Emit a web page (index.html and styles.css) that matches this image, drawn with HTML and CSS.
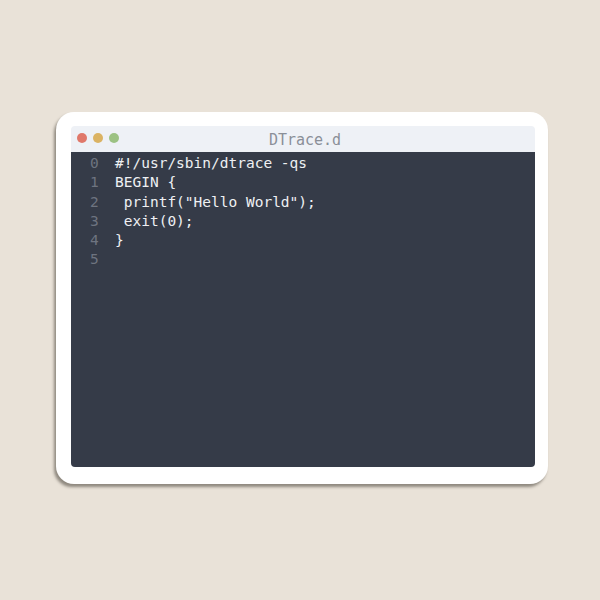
FILE: index.html
```html
<!DOCTYPE html>
<html>
<head>
<meta charset="utf-8">
<link rel="stylesheet" href="styles.css">
</head>
<body>
<div class="card">
  <div class="window">
    <div class="titlebar">
      <div class="dots">
        <span class="dot red"></span>
        <span class="dot yellow"></span>
        <span class="dot green"></span>
      </div>
      <div class="title">DTrace.d</div>
    </div>
    <div class="editor">
      <div class="line"><span class="num">0</span><span class="code">#!/usr/sbin/dtrace -qs</span></div>
      <div class="line"><span class="num">1</span><span class="code">BEGIN {</span></div>
      <div class="line"><span class="num">2</span><span class="code"> printf("Hello World");</span></div>
      <div class="line"><span class="num">3</span><span class="code"> exit(0);</span></div>
      <div class="line"><span class="num">4</span><span class="code">}</span></div>
      <div class="line"><span class="num">5</span><span class="code"></span></div>
    </div>
  </div>
</div>
</body>
</html>
```
FILE: styles.css
```css
html, body {
  margin: 0;
  padding: 0;
}
body {
  width: 600px;
  height: 600px;
  background: #e9e2d8;
  overflow: hidden;
}
.card {
  margin: 112px 0 0 56px;
  width: 492px;
  height: 372px;
  box-sizing: border-box;
  padding: 14px 13px 17px 15px;
  background: #ffffff;
  border-radius: 18px;
  box-shadow: -2px 3px 3px rgba(70, 64, 55, 0.55);
  display: flex;
}
.window {
  flex: 1;
  display: flex;
  flex-direction: column;
  border-radius: 4px;
  overflow: hidden;
}
.titlebar {
  height: 26px;
  background: #eef1f6;
  display: flex;
  align-items: center;
  position: relative;
}
.dots {
  display: flex;
  gap: 6px;
  padding-left: 6px;
  padding-bottom: 2px;
}
.dot {
  width: 10px;
  height: 10px;
  border-radius: 50%;
  display: block;
}
.red { background: #e0786a; }
.yellow { background: #dbb363; }
.green { background: #9cc283; }
.title {
  position: absolute;
  left: 0;
  right: 0;
  top: 0;
  bottom: 0;
  display: flex;
  align-items: center;
  justify-content: center;
  padding-left: 4px;
  padding-top: 1px;
  font-family: "DejaVu Sans Mono", monospace;
  font-size: 15px;
  color: #8a8f98;
}
.editor {
  flex: 1;
  background: #353b48;
  padding-top: 2px;
  font-family: "DejaVu Sans Mono", monospace;
  font-size: 14.5px;
  line-height: 19.3px;
  color: #eef0f3;
}
.line {
  display: flex;
  white-space: pre;
}
.num {
  width: 44px;
  box-sizing: border-box;
  padding-left: 19px;
  color: #6e7480;
}
.code {
  white-space: pre;
}
```
